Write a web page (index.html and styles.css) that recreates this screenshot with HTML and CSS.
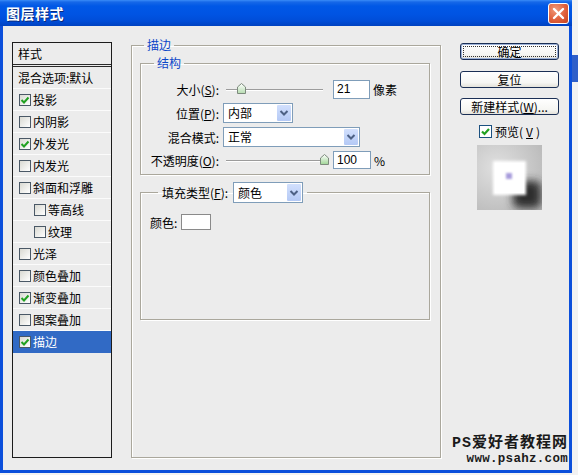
FILE: index.html
```html
<!DOCTYPE html>
<html lang="zh">
<head>
<meta charset="utf-8">
<title>图层样式</title>
<link rel="stylesheet" href="styles.css">
</head>
<body>
<div class="window">
  <div class="titlebar">
    <span class="title">图层样式</span>
    <span class="close"><svg width="19" height="19" viewBox="0 0 19 19"><path d="M5 5 L14 14 M14 5 L5 14" stroke="#fff" stroke-width="2.4" stroke-linecap="round"/></svg></span>
  </div>
  <div class="frame">
    <div class="stylelist">
      <div class="list-head">样式</div>
      <div class="row">混合选项:默认</div>
      <div class="row"><span class="cb"><svg width="10" height="10" viewBox="0 0 10 10"><path d="M1.5 5 L4 7.5 L8.5 2.5" fill="none" stroke="#21a121" stroke-width="2"/></svg></span>投影</div>
      <div class="row"><span class="cb"></span>内阴影</div>
      <div class="row"><span class="cb"><svg width="10" height="10" viewBox="0 0 10 10"><path d="M1.5 5 L4 7.5 L8.5 2.5" fill="none" stroke="#21a121" stroke-width="2"/></svg></span>外发光</div>
      <div class="row"><span class="cb"></span>内发光</div>
      <div class="row"><span class="cb"></span>斜面和浮雕</div>
      <div class="row sub"><span class="cb"></span>等高线</div>
      <div class="row sub"><span class="cb"></span>纹理</div>
      <div class="row"><span class="cb"></span>光泽</div>
      <div class="row"><span class="cb"></span>颜色叠加</div>
      <div class="row"><span class="cb"><svg width="10" height="10" viewBox="0 0 10 10"><path d="M1.5 5 L4 7.5 L8.5 2.5" fill="none" stroke="#21a121" stroke-width="2"/></svg></span>渐变叠加</div>
      <div class="row"><span class="cb"></span>图案叠加</div>
      <div class="row sel"><span class="cb"><svg width="10" height="10" viewBox="0 0 10 10"><path d="M1.5 5 L4 7.5 L8.5 2.5" fill="none" stroke="#21a121" stroke-width="2"/></svg></span>描边</div>
    </div>

    <fieldset class="group outer">
      <legend class="gtitle">描边</legend>
      <fieldset class="group inner">
        <legend class="gtitle">结构</legend>
        <div class="form">
          <span class="lbl">大小(<u>S</u>):</span>
          <div class="ctrl">
            <div class="slider"><span class="thumb" style="left:11px"><svg width="9" height="11" viewBox="0 0 9 11"><defs><linearGradient id="tg1" x1="0" y1="0" x2="0" y2="1"><stop offset="0" stop-color="#ffffff"/><stop offset="1" stop-color="#b6dcb0"/></linearGradient></defs><path d="M0.5 4 L4.5 0.5 L8.5 4 L8.5 10.5 L0.5 10.5 Z" fill="url(#tg1)" stroke="#7d8a7d"/></svg></span></div>
            <span class="field">21</span><span class="unit">像素</span>
          </div>
          <span class="lbl">位置(<u>P</u>):</span>
          <div class="ctrl">
            <div class="select w70"><span class="val">内部</span><span class="arrow"><svg width="10" height="8" viewBox="0 0 10 8"><path d="M1.5 2 L5 5.5 L8.5 2" fill="none" stroke="#4d6185" stroke-width="2"/></svg></span></div>
          </div>
          <span class="lbl">混合模式:</span>
          <div class="ctrl">
            <div class="select w137"><span class="val">正常</span><span class="arrow"><svg width="10" height="8" viewBox="0 0 10 8"><path d="M1.5 2 L5 5.5 L8.5 2" fill="none" stroke="#4d6185" stroke-width="2"/></svg></span></div>
          </div>
          <span class="lbl">不透明度(<u>O</u>):</span>
          <div class="ctrl">
            <div class="slider"><span class="thumb" style="left:94px"><svg width="9" height="11" viewBox="0 0 9 11"><defs><linearGradient id="tg2" x1="0" y1="0" x2="0" y2="1"><stop offset="0" stop-color="#ffffff"/><stop offset="1" stop-color="#9fd596"/></linearGradient></defs><path d="M0.5 4 L4.5 0.5 L8.5 4 L8.5 10.5 L0.5 10.5 Z" fill="url(#tg2)" stroke="#7d8a7d"/></svg></span></div>
            <span class="field short">100</span><span class="unit">%</span>
          </div>
        </div>
      </fieldset>
      <fieldset class="group fill">
        <legend class="filllegend"><span>填充类型(<u>F</u>):</span><span class="select w70"><span class="val">颜色</span><span class="arrow"><svg width="10" height="8" viewBox="0 0 10 8"><path d="M1.5 2 L5 5.5 L8.5 2" fill="none" stroke="#4d6185" stroke-width="2"/></svg></span></span></legend>
        <div class="colorrow">颜色:<span class="swatch"></span></div>
      </fieldset>
    </fieldset>

    <div class="side">
      <div class="btn default"><span class="focus">确定</span></div>
      <div class="btn b2">复位</div>
      <div class="btn b3">新建样式(<u>W</u>)...</div>
      <div class="preview"><span class="cb big"><svg width="11" height="11" viewBox="0 0 11 11"><path d="M2 5.5 L4.5 8 L9 3" fill="none" stroke="#21a121" stroke-width="2.2"/></svg></span>预览(<u>V</u>)</div>
      <div class="thumbbox">
        <svg width="65" height="65" viewBox="0 0 65 65">
          <defs>
            <radialGradient id="bgg" cx="0.3" cy="0.35" r="0.8"><stop offset="0" stop-color="#e0e0e0"/><stop offset="1" stop-color="#bababa"/></radialGradient>
            <filter id="blur5" x="-50%" y="-50%" width="200%" height="200%"><feGaussianBlur stdDeviation="4.5"/></filter>
            <filter id="blur2" x="-50%" y="-50%" width="200%" height="200%"><feGaussianBlur stdDeviation="1.6"/></filter>
            <filter id="blur1" x="-50%" y="-50%" width="200%" height="200%"><feGaussianBlur stdDeviation="0.8"/></filter>
          </defs>
          <rect width="65" height="65" fill="url(#bgg)"/>
          <rect x="36" y="36" width="28" height="27" rx="6" fill="#2f2f2f" filter="url(#blur5)"/>
          <rect x="16" y="16" width="33" height="34" fill="#ffffff" filter="url(#blur2)"/>
          <rect x="18" y="18" width="29" height="30" fill="#ffffff"/>
          <rect x="29" y="28" width="6" height="6" fill="#a79cdc" filter="url(#blur1)"/>
        </svg>
      </div>
    </div>
  </div>
  <div class="watermark">
    <div class="wm1">PS爱好者教程网</div>
    <div class="wm2">www.psahz.com</div>
  </div>
</div>
</body>
</html>
```

FILE: styles.css
```css
html, body {
  margin: 0;
  padding: 0;
}
body {
  width: 578px;
  height: 475px;
  overflow: hidden;
  background: linear-gradient(#f2f2f2 55px, #2f5fc9 55px, #2f5fc9 82px, #f2f2f2 82px);
  font-family: "Liberation Sans", "Noto Sans CJK SC", sans-serif;
  font-size: 12px;
  color: #000;
}
u { text-decoration: underline; text-underline-offset: 1px; }

.window {
  position: relative;
  width: 572px;
  height: 473px;
  display: flex;
  flex-direction: column;
}

.titlebar {
  height: 26px;
  flex: none;
  box-sizing: border-box;
  display: flex;
  align-items: center;
  justify-content: space-between;
  padding: 0 3px 0 6px;
  background: linear-gradient(#3a8cf7 0, #1668e8 2px, #0058e6 6px, #0054e3 14px, #004dd8 21px, #0042c0 26px);
}
.title {
  font-family: "Noto Sans CJK SC", sans-serif;
  font-weight: bold;
  font-size: 14px;
  color: #fff;
  letter-spacing: 0.5px;
  text-shadow: 1px 1px 0 #0b2a7a;
}
.close {
  width: 21px;
  height: 21px;
  box-sizing: border-box;
  border: 1px solid #fff;
  border-radius: 3px;
  background: radial-gradient(circle at 35% 30%, #f09a7a, #e0603c 55%, #c54420);
  display: flex;
  align-items: center;
  justify-content: center;
}

.frame {
  flex: 1;
  display: flex;
  align-items: flex-start;
  box-sizing: border-box;
  padding: 11px 0 0 9px;
  background: #ececec;
  border: 3px solid #0b4fdb;
  border-top: 0;
}

/* style list */
.stylelist {
  flex: none;
  margin-top: 5px;
  width: 100px;
  height: 416px;
  box-sizing: border-box;
  border: 1px solid #1c1c1c;
  background: #ececec;
  font-family: "Noto Sans CJK SC", sans-serif;
}
.list-head {
  height: 21px;
  line-height: 22px;
  padding-left: 5px;
  border-bottom: 3px double #2a2a2a;
}
.row {
  height: 21px;
  display: flex;
  align-items: center;
  padding-left: 5px;
  border-bottom: 1px solid #fbfbfb;
  white-space: nowrap;
}
.row .cb { margin-left: 1px; margin-right: 2px; }
.row.sub { padding-left: 20px; }
.row.sel {
  background: #316ac5;
  color: #fff;
  border-bottom-color: #316ac5;
}
.cb {
  width: 12px;
  height: 12px;
  box-sizing: border-box;
  border: 1px solid #4a5866;
  background: linear-gradient(135deg, #d9d9d2, #ffffff);
  display: inline-flex;
  align-items: center;
  justify-content: center;
  flex: none;
}
.cb.big {
  width: 13px;
  height: 13px;
  border-color: #1c5180;
  background: #fff;
}

/* group boxes */
.group {
  margin: 0;
  min-width: 0;
  border: 1px solid #aaa79c;
  box-shadow: 1px 1px 0 #fff, inset 1px 1px 0 #fff;
}
.gtitle {
  margin-left: 4px;
  padding: 0 3px;
  line-height: 16px;
  color: #0b46c8;
  font-family: "Noto Sans CJK SC", sans-serif;
}
.outer {
  flex: none;
  margin-left: 19px;
  width: 310px;
  height: 421px;
  box-sizing: border-box;
  padding: 2px 10px 0 8px;
}
.inner {
  padding: 8px 0 5px 8px;
}
.inner .gtitle { margin-left: 5px; }

.form {
  display: grid;
  grid-template-columns: 70px 1fr;
  grid-template-rows: 20px 20px 20px 18px;
  column-gap: 4px;
  row-gap: 4px;
  align-items: center;
}
.lbl {
  justify-self: end;
  white-space: nowrap;
  font-family: "Noto Sans CJK SC", sans-serif;
}
.ctrl {
  display: flex;
  align-items: center;
  height: 100%;
}
.slider {
  position: relative;
  width: 97px;
  height: 12px;
  margin-left: 3px;
  margin-right: 10px;
}
.slider::before {
  content: "";
  position: absolute;
  left: 0;
  right: 0;
  top: 6px;
  border-top: 1px solid #9c9c9c;
  border-bottom: 1px solid #ffffff;
}
.thumb {
  position: absolute;
  top: 0;
  display: block;
  width: 9px;
  height: 11px;
  line-height: 0;
}
.field {
  width: 37px;
  height: 19px;
  box-sizing: border-box;
  border: 1px solid #7f9db9;
  background: #fff;
  padding-left: 3px;
  line-height: 17px;
}
.field.short { width: 38px; height: 18px; line-height: 16px; }
.unit {
  margin-left: 3px;
  font-family: "Noto Sans CJK SC", sans-serif;
}
.select {
  display: flex;
  height: 20px;
  box-sizing: border-box;
  border: 1px solid #7f9db9;
  background: #fff;
  font-family: "Noto Sans CJK SC", sans-serif;
}
.w70 { width: 70px; }
.w137 { width: 137px; }
.select .val {
  flex: 1;
  padding-left: 4px;
  line-height: 18px;
}
.select .arrow {
  width: 16px;
  box-sizing: border-box;
  border: 1px solid #fff;
  border-radius: 2px;
  background: linear-gradient(#d2e0fd, #b4c9f5);
  display: flex;
  align-items: center;
  justify-content: center;
}

.fill {
  margin-top: 7px;
  height: 138px;
  box-sizing: border-box;
  padding: 11px 0 0 9px;
}
.filllegend {
  margin-left: 8px;
  padding: 0 4px;
  display: flex;
  align-items: center;
  gap: 5px;
  font-family: "Noto Sans CJK SC", sans-serif;
}
.filllegend .select { height: 21px; }
.filllegend .select .val { line-height: 19px; }
.colorrow {
  display: flex;
  align-items: center;
  gap: 4px;
  height: 16px;
  font-family: "Noto Sans CJK SC", sans-serif;
}
.swatch {
  width: 30px;
  height: 16px;
  box-sizing: border-box;
  border: 1px solid #8a8a8a;
  background: #fff;
}

/* right column */
.side {
  flex: none;
  width: 99px;
  margin-left: 19px;
  margin-top: 6px;
  display: flex;
  flex-direction: column;
  align-items: center;
  font-family: "Noto Sans CJK SC", sans-serif;
}
.btn {
  width: 99px;
  height: 17px;
  box-sizing: border-box;
  border: 1px solid #1b2f55;
  border-radius: 3px;
  background: linear-gradient(#ffffff, #f6f6f3 70%, #e4e2da);
  display: flex;
  align-items: center;
  justify-content: center;
  line-height: 15px;
  white-space: nowrap;
}
.btn.default {
  box-shadow: inset 0 0 0 1px #9db2d8;
  padding: 2px;
}
.btn.default .focus {
  flex: 1;
  align-self: stretch;
  display: flex;
  align-items: center;
  justify-content: center;
  outline: 1px dotted #333;
  outline-offset: -1px;
}
.btn.b2 { margin-top: 11px; }
.btn.b3 { margin-top: 10px; }
.preview {
  margin-top: 10px;
  height: 13px;
  display: flex;
  align-items: center;
  gap: 3px;
}
.thumbbox {
  margin-top: 7px;
  width: 65px;
  height: 65px;
  line-height: 0;
}

.watermark {
  position: absolute;
  right: 4px;
  bottom: 6px;
  text-align: right;
  font-weight: bold;
  color: #1a1a1a;
}
.wm1 {
  font-family: "Liberation Mono", "Noto Sans CJK SC", monospace;
  font-size: 15px;
  line-height: 17px;
  letter-spacing: 1px;
}
.wm2 {
  font-family: "Liberation Mono", monospace;
  font-size: 12.5px;
  line-height: 15px;
  letter-spacing: 0.3px;
}
```
